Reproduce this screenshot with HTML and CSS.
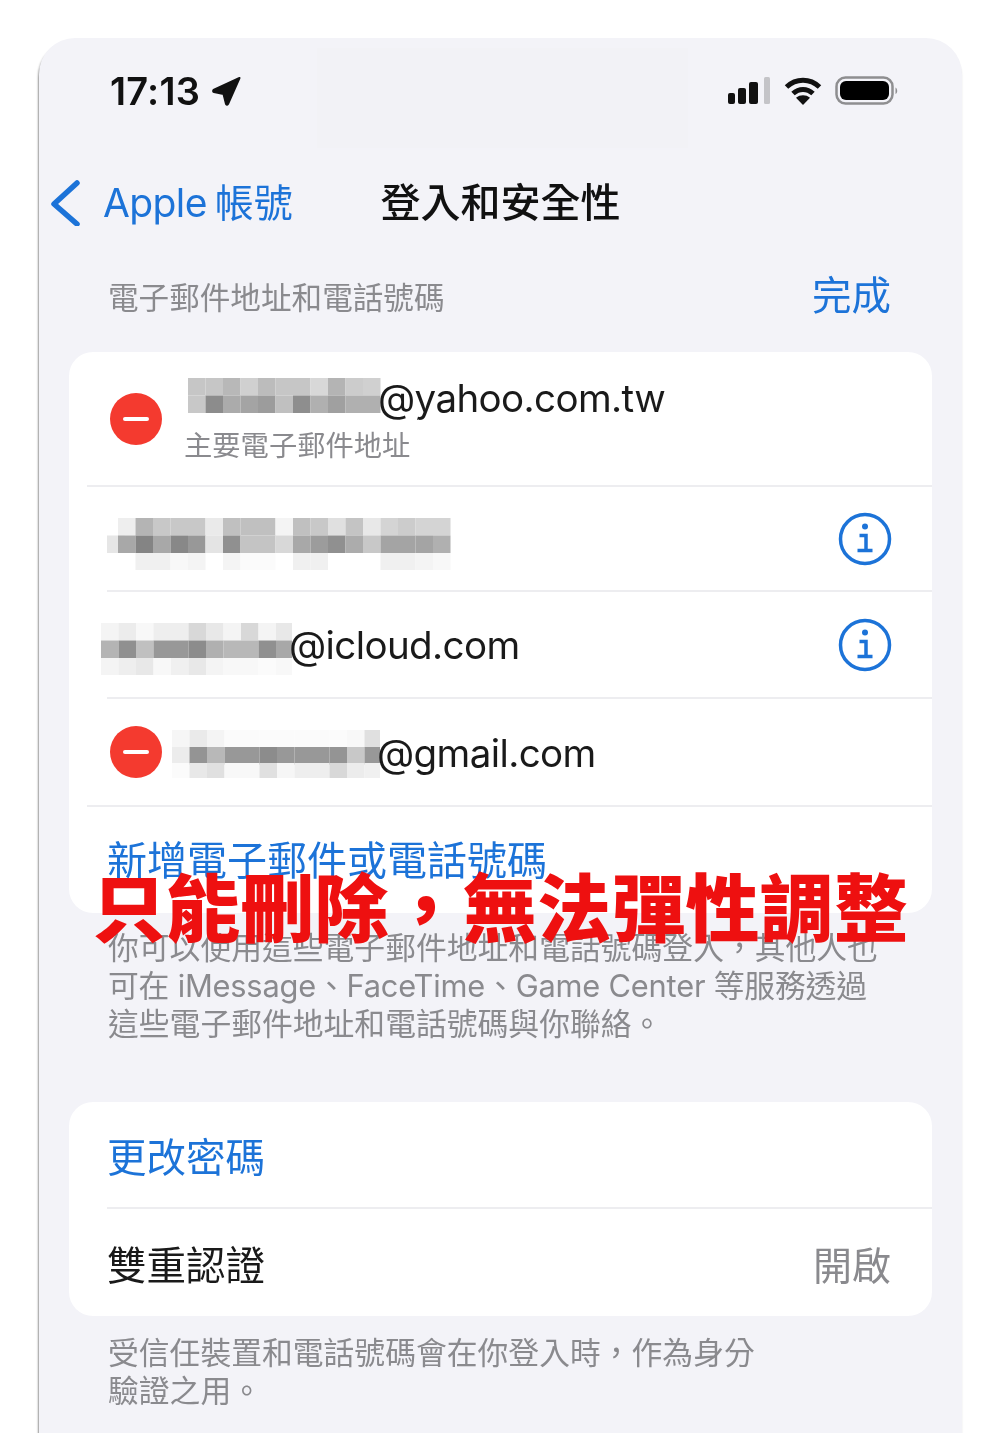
FILE: index.html

```html
<!DOCTYPE html>
<html lang="zh-Hant">
<head>
    <title>登入和安全性</title>
    <meta name="viewport" content="width=device-width, initial-scale=1">
    <link rel="stylesheet" href="styles.css">
</head>
<body>

<div class="phone">

    <div class="status">
        <div class="status-left">
            <span class="time">17:13</span>
            <svg class="arrow" width="31" height="31" viewBox="0 0 31 31"><path d="M28.500 2 2.500 14Q1.500 15.500 3 16L12.500 18 15 28Q16 29.500 17 28Z"/></svg>
        </div>
        <div class="status-mid"></div>
        <div class="status-right">
            <svg class="signal" width="44" height="30" viewBox="0 0 44 30">
                <rect x="1" y="17" width="7" height="11" rx="2"/>
                <rect x="11" y="12" width="8" height="16" rx="2"/>
                <rect x="22" y="6" width="9" height="22" rx="2"/>
                <rect class="signal-off" x="37" y="1" width="6" height="27" rx="1.500"/>
            </svg>
            <svg class="wifi" width="38" height="30" viewBox="0 0 38 30">
                <path d="M2.500 11C12 2 26 2 35.500 11" />
                <path d="M9 17.500C15 12 23 12 29 17.500" />
                <path class="wifi-dot" d="M19 29 12 21.800C16 18.500 22 18.500 26 21.800z"/>
            </svg>
            <svg class="battery" width="63" height="30" viewBox="0 0 63 30">
                <rect class="battery-case" x="1.500" y="1.500" width="56" height="26" rx="9"/>
                <rect x="5" y="5" width="49" height="19" rx="6"/>
                <path class="battery-nub" d="M60.500 11.500c2 .8 2.500 5.500 0 6.500z"/>
            </svg>
        </div>
    </div>

    <div class="nav">
        <a class="back">
            <svg class="chevron" width="30" height="46" viewBox="0 0 30 46"><path d="M26 3 3 24 26 44"/></svg>
            <span class="back-label"><span class="back-latin">Apple</span>帳號</span>
        </a>
        <div class="nav-title">登入和安全性</div>
    </div>

    <div class="section-head">
        <span class="section-title">電子郵件地址和電話號碼</span>
        <span class="blue-link done">完成</span>
    </div>

    <div class="card">
        <div class="row row-primary">
            <span class="minus"></span>
            <div class="primary-text">
                <div class="email">
                    <svg class="mosaic mosaic-a" width="193" height="35">
                        <rect x="0" y="0" fill="#c6c6c6"/><rect x="17.500" y="0" fill="#c6c6c6"/><rect x="35" y="0" fill="#b8b8b8"/><rect x="52.500" y="0" fill="#d0d0d0"/><rect x="70" y="0" fill="#bcbcbc"/><rect x="87.500" y="0" fill="#c6c6c6"/><rect x="105" y="0" fill="#c6c6c6"/><rect x="122.500" y="0" fill="#d8d8d8"/><rect x="140" y="0" fill="#b4b4b4"/><rect x="157.500" y="0" fill="#cccccc"/><rect x="175" y="0" fill="#d0d0d0"/>
                        <rect x="0" y="17.500" fill="#c8c8c8"/><rect x="17.500" y="17.500" fill="#8c8c8c"/><rect x="35" y="17.500" fill="#ababab"/><rect x="52.500" y="17.500" fill="#a4a4a4"/><rect x="70" y="17.500" fill="#9c9c9c"/><rect x="87.500" y="17.500" fill="#c0c0c0"/><rect x="105" y="17.500" fill="#8e8e8e"/><rect x="122.500" y="17.500" fill="#b0b0b0"/><rect x="140" y="17.500" fill="#a0a0a0"/><rect x="157.500" y="17.500" fill="#b0b0b0"/><rect x="175" y="17.500" fill="#b0b0b0"/>
                    </svg>
                    <span>@yahoo.com.tw</span>
                </div>
                <div class="sub">主要電子郵件地址</div>
            </div>
        </div>
        <div class="sep sep-long"></div>

        <div class="row row-b">
            <svg class="mosaic mosaic-b" width="344" height="52">
                <rect x="0" y="17.500" width="11" fill="#e6e6e6"/>
                <rect x="11" y="0" fill="#eeeeee"/><rect x="28.500" y="0" fill="#b4b4b4"/><rect x="46" y="0" fill="#c8c8c8"/><rect x="63.500" y="0" fill="#c8c8c8"/><rect x="81" y="0" fill="#c8c8c8"/><rect x="98.500" y="0" fill="#eaeaea"/><rect x="116" y="0" fill="#c0c0c0"/><rect x="133.500" y="0" fill="#c0c0c0"/><rect x="151" y="0" fill="#c0c0c0"/><rect x="168.500" y="0" fill="#f4f4f4"/><rect x="186" y="0" fill="#c0c0c0"/><rect x="203.500" y="0" fill="#c8c8c8"/><rect x="221" y="0" fill="#e0e0e0"/><rect x="238.500" y="0" fill="#c4c4c4"/><rect x="256" y="0" fill="#e8e8e8"/><rect x="273.500" y="0" fill="#d4d4d4"/><rect x="291" y="0" fill="#cccccc"/><rect x="308.500" y="0" fill="#d4d4d4"/><rect x="326" y="0" fill="#d4d4d4"/>
                <rect x="11" y="17.500" fill="#a8a8a8"/><rect x="28.500" y="17.500" fill="#848484"/><rect x="46" y="17.500" fill="#a8a8a8"/><rect x="63.500" y="17.500" fill="#888888"/><rect x="81" y="17.500" fill="#989898"/><rect x="98.500" y="17.500" fill="#e4e4e4"/><rect x="116" y="17.500" fill="#909090"/><rect x="133.500" y="17.500" fill="#c4c4c4"/><rect x="151" y="17.500" fill="#c4c4c4"/><rect x="168.500" y="17.500" fill="#d8d8d8"/><rect x="186" y="17.500" fill="#a8a8a8"/><rect x="203.500" y="17.500" fill="#9c9c9c"/><rect x="221" y="17.500" fill="#909090"/><rect x="238.500" y="17.500" fill="#acacac"/><rect x="256" y="17.500" fill="#c8c8c8"/><rect x="273.500" y="17.500" fill="#a4a4a4"/><rect x="291" y="17.500" fill="#a4a4a4"/><rect x="308.500" y="17.500" fill="#a4a4a4"/><rect x="326" y="17.500" fill="#b0b0b0"/>
                <rect x="28.500" y="35" fill="#f0f0f0"/><rect x="46" y="35" fill="#f0f0f0"/><rect x="63.500" y="35" fill="#f8f8f8"/><rect x="81" y="35" fill="#f4f4f4"/><rect x="116" y="35" fill="#f4f4f4"/><rect x="133.500" y="35" fill="#fbfbfb"/><rect x="151" y="35" fill="#fbfbfb"/><rect x="186" y="35" fill="#f0f0f0"/><rect x="203.500" y="35" fill="#f0f0f0"/><rect x="273.500" y="35" fill="#f0f0f0"/><rect x="291" y="35" fill="#f0f0f0"/><rect x="308.500" y="35" fill="#f4f4f4"/><rect x="326" y="35" fill="#f8f8f8"/>
            </svg>
            <svg class="info" width="54" height="54" viewBox="0 0 54 54"><circle cx="27" cy="27" r="24.500"/><circle class="info-dot" cx="27" cy="14.500" r="3"/><path d="M21.500 23.500H28V38M19.500 38.500H34.500"/></svg>
        </div>
        <div class="sep sep-short"></div>

        <div class="row row-c">
            <div class="email">
                <svg class="mosaic" width="191" height="52">
                    <rect x="0" y="0" fill="#f4f4f4"/><rect x="17.500" y="0" fill="#ececec"/><rect x="35" y="0" fill="#f8f8f8"/><rect x="52.500" y="0" fill="#eeeeee"/><rect x="70" y="0" fill="#eeeeee"/><rect x="87.500" y="0" fill="#d8d8d8"/><rect x="105" y="0" fill="#e8e8e8"/><rect x="122.500" y="0" fill="#f4f4f4"/><rect x="140" y="0" fill="#d8d8d8"/><rect x="157.500" y="0" fill="#f4f4f4"/><rect x="175" y="0" fill="#e8e8e8"/>
                    <rect x="0" y="17.500" fill="#b4b4b4"/><rect x="17.500" y="17.500" fill="#909090"/><rect x="35" y="17.500" fill="#c0c0c0"/><rect x="52.500" y="17.500" fill="#989898"/><rect x="70" y="17.500" fill="#989898"/><rect x="87.500" y="17.500" fill="#8c8c8c"/><rect x="105" y="17.500" fill="#b0b0b0"/><rect x="122.500" y="17.500" fill="#b8b8b8"/><rect x="140" y="17.500" fill="#b8b8b8"/><rect x="157.500" y="17.500" fill="#909090"/><rect x="175" y="17.500" fill="#a8a8a8"/>
                    <rect x="0" y="35" fill="#f4f4f4"/><rect x="17.500" y="35" fill="#eeeeee"/><rect x="35" y="35" fill="#e8e8e8"/><rect x="52.500" y="35" fill="#f8f8f8"/><rect x="70" y="35" fill="#f0f0f0"/><rect x="87.500" y="35" fill="#e8e8e8"/><rect x="105" y="35" fill="#f4f4f4"/><rect x="122.500" y="35" fill="#f8f8f8"/><rect x="140" y="35" fill="#f8f8f8"/><rect x="157.500" y="35" fill="#fbfbfb"/><rect x="175" y="35" fill="#f8f8f8"/>
                </svg>
                <span>@icloud.com</span>
            </div>
            <svg class="info" width="54" height="54" viewBox="0 0 54 54"><circle cx="27" cy="27" r="24.500"/><circle class="info-dot" cx="27" cy="14.500" r="3"/><path d="M21.500 23.500H28V38M19.500 38.500H34.500"/></svg>
        </div>
        <div class="sep sep-short"></div>

        <div class="row row-d">
            <span class="minus"></span>
            <div class="email">
                <svg class="mosaic" width="208" height="48">
                    <rect x="0" y="0" fill="#f6f6f6"/><rect x="17.500" y="0" fill="#eaeaea"/><rect x="35" y="0" fill="#f4f4f4"/><rect x="52.500" y="0" fill="#fbfbfb"/><rect x="70" y="0" fill="#fbfbfb"/><rect x="87.500" y="0" fill="#fbfbfb"/><rect x="105" y="0" fill="#fbfbfb"/><rect x="122.500" y="0" fill="#fbfbfb"/><rect x="140" y="0" fill="#fbfbfb"/><rect x="157.500" y="0" fill="#fbfbfb"/><rect x="175" y="0" fill="#f8f8f8"/><rect x="192.500" y="0" fill="#e0e0e0"/>
                    <rect x="0" y="17" fill="#ececec"/><rect x="17.500" y="17" fill="#949494"/><rect x="35" y="17" fill="#b8b8b8"/><rect x="52.500" y="17" fill="#989898"/><rect x="70" y="17" fill="#989898"/><rect x="87.500" y="17" fill="#8c8c8c"/><rect x="105" y="17" fill="#989898"/><rect x="122.500" y="17" fill="#989898"/><rect x="140" y="17" fill="#989898"/><rect x="157.500" y="17" fill="#949494"/><rect x="175" y="17" fill="#c8c8c8"/><rect x="192.500" y="17" fill="#989898"/>
                    <rect x="0" y="33" fill="#fbfbfb"/><rect x="17.500" y="33" fill="#e8e8e8"/><rect x="35" y="33" fill="#e0e0e0"/><rect x="52.500" y="33" fill="#f8f8f8"/><rect x="70" y="33" fill="#f8f8f8"/><rect x="87.500" y="33" fill="#e0e0e0"/><rect x="105" y="33" fill="#f6f6f6"/><rect x="122.500" y="33" fill="#eeeeee"/><rect x="140" y="33" fill="#eeeeee"/><rect x="157.500" y="33" fill="#d8d8d8"/><rect x="175" y="33" fill="#ececec"/><rect x="192.500" y="33" fill="#f0f0f0"/>
                </svg>
                <span>@gmail.com</span>
            </div>
        </div>
        <div class="sep sep-long"></div>

        <div class="row row-add">
            <span class="blue-link add-link">新增電子郵件或電話號碼</span>
        </div>
    </div>

    <div class="note note-first">你可以使用這些電子郵件地址和電話號碼登入，其他人也<br><span class="note-tight">可在 iMessage、FaceTime、Game Center 等服務透過</span><br>這些電子郵件地址和電話號碼與你聯絡。</div>

    <div class="card card-second">
        <div class="row row-plain">
            <span class="blue-link">更改密碼</span>
        </div>
        <div class="sep sep-short"></div>
        <div class="row row-plain">
            <span class="row-label">雙重認證</span>
            <span class="row-value">開啟</span>
        </div>
    </div>

    <div class="note note-second">受信任裝置和電話號碼會在你登入時，作為身分<br>驗證之用。</div>

    <div class="banner">只能刪除，無法彈性調整</div>
</div>

</body>
</html>
```

FILE: styles.css

```css
body { margin: 0; background: #fff; font-family: Inter, "Noto Sans CJK TC", sans-serif; }

.phone { position: relative; box-sizing: border-box; width: 923px; height: 1395px; margin: 38px 0 0 39px; background: #f3f3f8; border-radius: 36px 36px 0 0; box-shadow: -1.500px 3px 2px -1px #999, 1px 3px 2px -1px #e2e2e2; white-space: nowrap; filter: blur(0.4px); }

.status { display: flex; height: 110px; }
.status-left { display: flex; align-items: center; gap: 11px; width: 278px; padding: 0 0 4px 71px; box-sizing: border-box; }
.time { font-size: 38px; font-weight: 600; letter-spacing: 0.2px; color: #111; }
.arrow { fill: #111; stroke: #111; stroke-width: 2; stroke-linejoin: round; }
.status-mid { width: 371px; height: 100px; margin-top: 10px; background: #f2f2f6; }
.status-right { display: flex; align-items: center; padding: 0 0 4px 39px; }
.signal { fill: #111; }
.signal-off { fill: #c4c4c8; }
.wifi { margin-left: 13px; fill: none; stroke: #111; stroke-width: 5; }
.wifi-dot { fill: #111; stroke: none; }
.battery { margin-left: 13px; fill: #000; }
.battery-case { fill: none; stroke: #8e8e90; stroke-width: 2.500; }
.battery-nub { fill: #8e8e90; }

.nav { position: relative; display: flex; align-items: center; justify-content: center; box-sizing: border-box; height: 110px; padding-bottom: 6px; }
.back { position: absolute; left: 12px; top: 0; height: 104px; display: flex; align-items: center; gap: 22px; color: #1c73d8; }
.chevron { fill: none; stroke: #1c73d8; stroke-width: 5.500; stroke-linecap: round; stroke-linejoin: round; margin-top: 5px; }
.back-label { font-size: 39px; }
.back-latin { margin-right: 8px; letter-spacing: -0.6px; }
.nav-title { font-size: 40px; font-weight: 500; color: #111; }

.section-head { display: flex; justify-content: space-between; align-items: center; height: 78px; padding: 0 71px 0 69px; margin-bottom: 16px; }
.section-title { font-size: 30.600px; color: #8a8a8e; margin-bottom: 2px; }
.blue-link { font-size: 39.500px; color: #1c73d8; }
.done { margin-bottom: 10px; }
.add-link { font-size: 40px; }

.card { margin: 0 30px; background: #fff; border-radius: 24px; }
.row { display: flex; align-items: center; padding-left: 41px; }
.row-primary { height: 133px; gap: 22px; }
.row-b { height: 103px; justify-content: space-between; padding: 0 40px 0 38px; }
.row-c { height: 105px; justify-content: space-between; padding: 0 40px 0 32px; }
.row-d { height: 106px; gap: 10px; }
.row-add { height: 106px; padding-left: 38px; align-items: flex-start; }
.row-add .blue-link { margin-top: 30px; line-height: 48px; }
.row-plain { height: 105px; justify-content: space-between; padding: 0 41px 0 38px; }
.card-second .row-plain:last-child { height: 107px; }

.sep { height: 2px; background: #ededf0; }
.sep-long { margin-left: 18px; }
.sep-short { margin-left: 38px; }

.minus { position: relative; flex: none; width: 52px; height: 52px; border-radius: 50%; background: #f43a2f; }
.minus::after { content: ""; position: absolute; left: 13px; right: 13px; top: 24px; height: 4px; border-radius: 2px; background: #fff; }

.email { display: flex; align-items: center; font-size: 38.500px; letter-spacing: -0.6px; color: #1a1a1a; }
.email span { margin: 1px 0 0 -3px; }
.mosaic { flex: none; }
.mosaic rect { width: 17.500px; height: 17.500px; }
.mosaic-a { margin: 0 0 4px 4px; }
.primary-text { margin-top: 2px; }
.primary-text .email { height: 44px; }
.sub { margin-top: 8px; font-size: 28.300px; line-height: 36px; color: #8a8a8e; }
.mosaic-b { margin-top: 10px; }
.row-c .mosaic { margin-top: 8px; }
.row-d .mosaic { margin-top: 4px; }

.info { flex: none; fill: none; stroke: #1c73d8; stroke-width: 3.500; }
.info-dot { fill: #1c73d8; stroke: none; }

.note { font-size: 30.800px; line-height: 38px; color: #8a8a8e; padding-left: 69px; }
.note-first { padding-top: 16px; }
.note-tight { letter-spacing: -0.200px; }
.card-second { margin-top: 59px; }
.note-second { padding-top: 18px; }

.row-label { font-size: 39.500px; color: #1a1a1a; }
.row-value { font-size: 39px; color: #8a8a8e; }

.banner { position: absolute; left: 53px; top: 831px; font-size: 74px; line-height: 80px; letter-spacing: 0.200px; font-weight: 900; color: #ee1010; }
```
